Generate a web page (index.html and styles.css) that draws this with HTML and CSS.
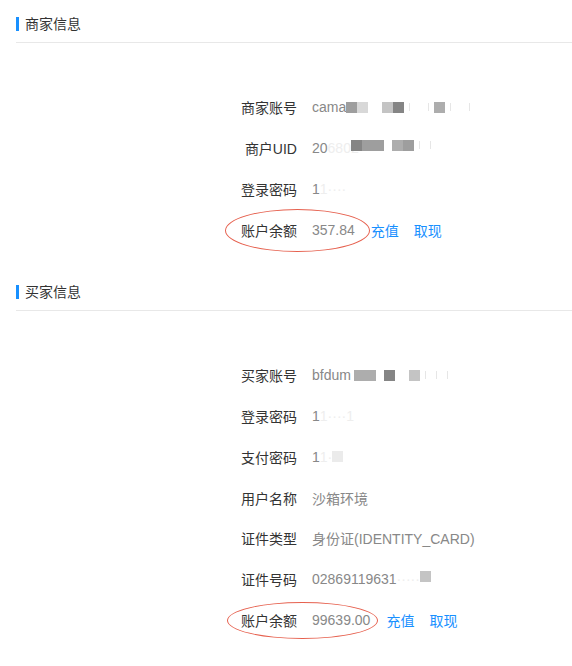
FILE: index.html
```html
<!DOCTYPE html>
<html lang="zh-CN">
<head>
    <meta charset="UTF-8">
    <meta name="viewport" content="width=device-width, initial-scale=1.0">
    <title>沙箱账号</title>
    <link rel="stylesheet" href="styles.css">
</head>
<body>

    <div class="section">
        <div class="section-head">
            <span class="bar"></span>
            <span class="title">商家信息</span>
        </div>
        <div class="rows">
            <div class="row">
                <span class="label">商家账号</span>
                <span class="value">cama<span class="mosaic"><i class="m2"></i><i class="m5"></i><i class="gap"></i><i class="m4"></i><i class="m1"></i><i class="dot"></i><i class="gap-s"></i><i class="dot"></i><i class="m3"></i><i class="dot"></i><i class="gap-s"></i><i class="dot"></i></span></span>
            </div>
            <div class="row">
                <span class="label">商户UID</span>
                <span class="value">20<span class="faint">6802</span><span class="mosaic up"><i class="m1 shift"></i><i class="m2"></i><i class="m2"></i><i class="gap-s"></i><i class="m3"></i><i class="m2"></i><i class="dot"></i><i class="dot"></i></span></span>
            </div>
            <div class="row">
                <span class="label">登录密码</span>
                <span class="value">1<span class="faint">1····</span></span>
            </div>
            <div class="row">
                <span class="label">账户余额</span>
                <span class="value">357.84</span>
                <a class="link first" href="#">充值</a>
                <a class="link" href="#">取现</a>
                <span class="circle circle-a"></span>
            </div>
        </div>
    </div>

    <div class="section">
        <div class="section-head">
            <span class="bar"></span>
            <span class="title">买家信息</span>
        </div>
        <div class="rows">
            <div class="row">
                <span class="label">买家账号</span>
                <span class="value">bfdum<span class="mosaic"><i class="gap-xs"></i><i class="m3"></i><i class="m3"></i><i class="gap-s"></i><i class="m1"></i><i class="gap"></i><i class="m4"></i><i class="dot"></i><i class="dot"></i><i class="dot"></i></span></span>
            </div>
            <div class="row">
                <span class="label">登录密码</span>
                <span class="value">1<span class="faint">1····1</span></span>
            </div>
            <div class="row">
                <span class="label">支付密码</span>
                <span class="value">1<span class="faint">1·</span><span class="mosaic"><i class="m6"></i></span></span>
            </div>
            <div class="row">
                <span class="label">用户名称</span>
                <span class="value">沙箱环境</span>
            </div>
            <div class="row">
                <span class="label">证件类型</span>
                <span class="value">身份证(IDENTITY_CARD)</span>
            </div>
            <div class="row">
                <span class="label">证件号码</span>
                <span class="value">02869119631<span class="faint">·····</span><span class="mosaic up"><i class="m4"></i></span></span>
            </div>
            <div class="row">
                <span class="label">账户余额</span>
                <span class="value">99639.00</span>
                <a class="link first" href="#">充值</a>
                <a class="link" href="#">取现</a>
                <span class="circle circle-b"></span>
            </div>
        </div>
    </div>

</body>
</html>
```

FILE: styles.css
```css
body {
    margin: 0;
    padding: 0;
    background-color: #fff;
    font-family: 'Liberation Sans', 'Noto Sans CJK SC', sans-serif;
    font-size: 14px;
    color: #333;
}
.section {
    padding-left: 16px;
}
.section-head {
    display: flex;
    align-items: center;
    padding: 17px 0 11px;
    border-bottom: 1px solid #e8e8e8;
    line-height: 14px;
}
.bar {
    width: 3px;
    height: 14px;
    background-color: #1890ff;
    margin-right: 6px;
}
.title {
    color: #333;
}
.rows {
    padding: 44px 0 18px;
}
.row {
    position: relative;
    display: flex;
    align-items: center;
    height: 40.75px;
    padding-left: 197px;
}
.label {
    width: 84px;
    text-align: right;
    color: #333;
}
.value {
    margin-left: 15px;
    color: #888;
    display: flex;
    align-items: center;
    white-space: nowrap;
}
.faint {
    color: #eee;
}
.link {
    color: #1890ff;
    text-decoration: none;
    margin-left: 15px;
}
.link.first {
    margin-left: 16px;
}
.mosaic {
    display: flex;
    align-items: center;
}
.mosaic.up {
    margin-top: -6px;
}
.mosaic i {
    display: block;
    width: 11px;
    height: 11px;
}
.mosaic .m1 { background-color: #858585; }
.mosaic .m2 { background-color: #9e9e9e; }
.mosaic .m3 { background-color: #adadad; }
.mosaic .m4 { background-color: #c4c4c4; }
.mosaic .m5 { background-color: #d8d8d8; }
.mosaic .m6 { background-color: #ebebeb; }
.mosaic .shift { margin-left: -8px; }
.mosaic .gap { width: 14px; }
.mosaic .gap-s { width: 8px; }
.mosaic .gap-xs { width: 3px; }
.mosaic .dot {
    width: 1px;
    height: 8px;
    margin: 0 5px;
    background-color: #e6e6e6;
}
.circle {
    position: absolute;
    border: 1.5px solid #e6604e;
    border-radius: 50%;
    box-sizing: border-box;
}
.circle-a {
    left: 209px;
    top: 0;
    width: 145px;
    height: 43px;
}
.circle-b {
    left: 211px;
    top: 2px;
    width: 151px;
    height: 37px;
}
```
